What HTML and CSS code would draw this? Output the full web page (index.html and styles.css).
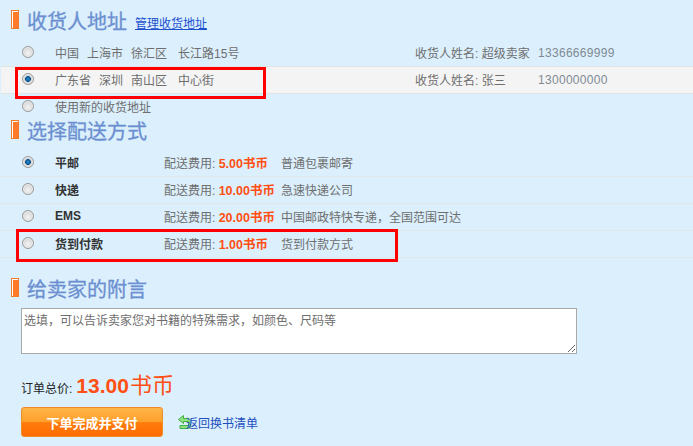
FILE: index.html
```html
<!DOCTYPE html>
<html lang="zh-CN">
<head>
    <meta charset="UTF-8">
    <title>确认订单</title>
    <link rel="stylesheet" href="styles.css">
</head>
<body>
    <div class="order-page">
        <div class="section-title">
            <span class="marker"></span>
            <h2>收货人地址</h2>
            <a href="#" class="manage-link">管理收货地址</a>
        </div>
        <div class="address-row">
            <input type="radio" name="address">
            <span class="address"><span>中国</span><span>上海市</span><span>徐汇区</span><span class="street">长江路15号</span></span>
            <span>收货人姓名: 超级卖家</span>
            <span class="phone">13366669999</span>
        </div>
        <div class="address-row selected">
            <input type="radio" name="address" checked>
            <span class="address"><span>广东省</span><span>深圳</span><span>南山区</span><span class="street">中心街</span></span>
            <span>收货人姓名: 张三</span>
            <span class="phone">1300000000</span>
        </div>
        <div class="address-row">
            <input type="radio" name="address">
            <span class="address">使用新的收货地址</span>
        </div>

        <div class="section-title">
            <span class="marker"></span>
            <h2>选择配送方式</h2>
        </div>
        <div class="shipping-row">
            <input type="radio" name="shipping" checked>
            <b>平邮</b>
            <span>配送费用: <em class="fee">5.00书币</em></span>
            <span>普通包裹邮寄</span>
        </div>
        <div class="shipping-row">
            <input type="radio" name="shipping">
            <b>快递</b>
            <span>配送费用: <em class="fee">10.00书币</em></span>
            <span>急速快递公司</span>
        </div>
        <div class="shipping-row">
            <input type="radio" name="shipping">
            <b>EMS</b>
            <span>配送费用: <em class="fee">20.00书币</em></span>
            <span>中国邮政特快专递，全国范围可达</span>
        </div>
        <div class="shipping-row">
            <input type="radio" name="shipping">
            <b>货到付款</b>
            <span>配送费用: <em class="fee">1.00书币</em></span>
            <span>货到付款方式</span>
        </div>

        <div class="section-title comment-title">
            <span class="marker"></span>
            <h2>给卖家的附言</h2>
        </div>
        <textarea class="comment">选填，可以告诉卖家您对书籍的特殊需求，如颜色、尺码等</textarea>

        <div class="total">
            <span>订单总价:</span>
            <strong>13.00</strong>
            <span class="total-unit">书币</span>
        </div>

        <div class="actions">
            <button type="button" class="submit-button">下单完成并支付</button>
            <a href="#" class="back-link">
                <svg width="13" height="15" viewBox="0 0 13 15"><path d="M5.500 .5 .5 4.500 5.500 8.500V6.500H10C11.500 6.500 11.500 10.500 10 10.500H2V13.500H10.500C13.500 13.500 13.500 3.500 10.500 3.500H5.500Z" fill="#8fe27d" stroke="#3fae45"/></svg>
                <span>返回换书清单</span>
            </a>
        </div>

        <!-- red annotation boxes -->
        <div class="note note-address"></div>
        <div class="note note-shipping"></div>
    </div>
</body>
</html>
```

FILE: styles.css
```css
body {
    margin: 0;
    background: #dbeffc;
    font-family: "Liberation Sans", "Noto Sans CJK SC", sans-serif;
    font-size: 12px;
    color: #6e6e6e;
}

.order-page {
    position: relative;
    height: 446px;
    padding-top: 10px;
    box-sizing: border-box;
    overflow: hidden;
}

.section-title {
    display: flex;
    align-items: flex-start;
    height: 30px;
    padding-left: 11px;
}

.section-title h2 {
    margin: 0 0 0 8px;
    font-size: 20px;
    font-weight: normal;
    line-height: 24px;
    color: #6b8fd0;
    -webkit-text-stroke: .3px #6b8fd0;
}

.comment-title {
    margin-top: 20px;
}

.marker {
    width: 6px;
    height: 17px;
    background: #ff7a2a;
    border: 1px solid #f27a2c;
    box-shadow: inset 1px 1px 0 #fff;
}

.manage-link {
    margin: 4px 0 0 8px;
    color: #1d4fd0;
}

input[type="radio"] {
    appearance: none;
    width: 12px;
    height: 12px;
    margin: 0;
    border: 1px solid #9a9a9a;
    border-radius: 50%;
    background: radial-gradient(circle at 50% 60%, #f4f4f4 0, #dcdcdc 55%, #c4c4c4 100%);
    box-shadow: inset 0 0 0 1px #eee;
}

input[type="radio"]:checked {
    background: radial-gradient(circle, #2a8fd0 0, #0b4f8c 38%, #d8d8d8 44%, #c8c8c8 100%);
}

.address-row {
    display: grid;
    grid-template-columns: 33px 360px 123px 1fr;
    align-items: center;
    height: 24px;
    padding: 0 0 2px 22px;
}

.address-row.selected {
    margin-left: 1px;
    padding-left: 21px;
    background: #f4f4f4;
    border-top: 1px solid #e3e3e3;
    border-bottom: 1px solid #e3e3e3;
}

.address {
    display: flex;
    gap: 8px;
}

.street {
    margin-left: 3px;
}

.phone {
    padding-top: 2px;
    letter-spacing: .3px;
    color: #808a94;
}

.shipping-row {
    display: grid;
    grid-template-columns: 33px 109px 117px 1fr;
    align-items: center;
    height: 24px;
    padding: 0 0 2px 22px;
    border-bottom: 1px solid #e3e6ea;
}

.shipping-row b {
    color: #333;
}

.fee {
    font-style: normal;
    font-weight: bold;
    font-size: 12.500px;
    color: #ff4f14;
}

.comment {
    display: block;
    width: 556px;
    height: 46px;
    margin-left: 21px;
    padding: 2px;
    box-sizing: border-box;
    border: 1px solid #a9a9a9;
    font-family: inherit;
    font-size: 12px;
    color: #6e6e6e;
    background: #fff;
}

.total {
    display: flex;
    align-items: baseline;
    margin: 19px 0 0 21px;
    color: #222;
    line-height: 26px;
}

.total strong {
    margin-left: 4px;
    font-size: 21px;
    color: #ff4f14;
}

.total-unit {
    margin-left: 1px;
    font-size: 22px;
    color: #ff4f14;
}

.actions {
    display: flex;
    align-items: center;
    margin: 5px 0 0 21px;
}

.submit-button {
    width: 142px;
    height: 30px;
    padding: 0;
    border: 1px solid #f08c28;
    border-radius: 3px;
    background: linear-gradient(#ffb448 0, #ff9f2c 50%, #ff7c0c 52%, #ff6c00 100%);
    font-family: inherit;
    font-size: 13px;
    font-weight: bold;
    color: #fff;
}

.back-link {
    display: flex;
    align-items: center;
    margin-left: 15px;
    text-decoration: none;
    color: #1d4fc0;
}

.back-link svg {
    margin-right: -5px;
}

/* annotations over the page */
.note {
    position: absolute;
    box-sizing: border-box;
    border: 3px solid #f00;
}

.note-address {
    left: 15px;
    top: 67px;
    width: 251px;
    height: 32px;
}

.note-shipping {
    left: 16px;
    top: 229px;
    width: 382px;
    height: 33px;
}
```
